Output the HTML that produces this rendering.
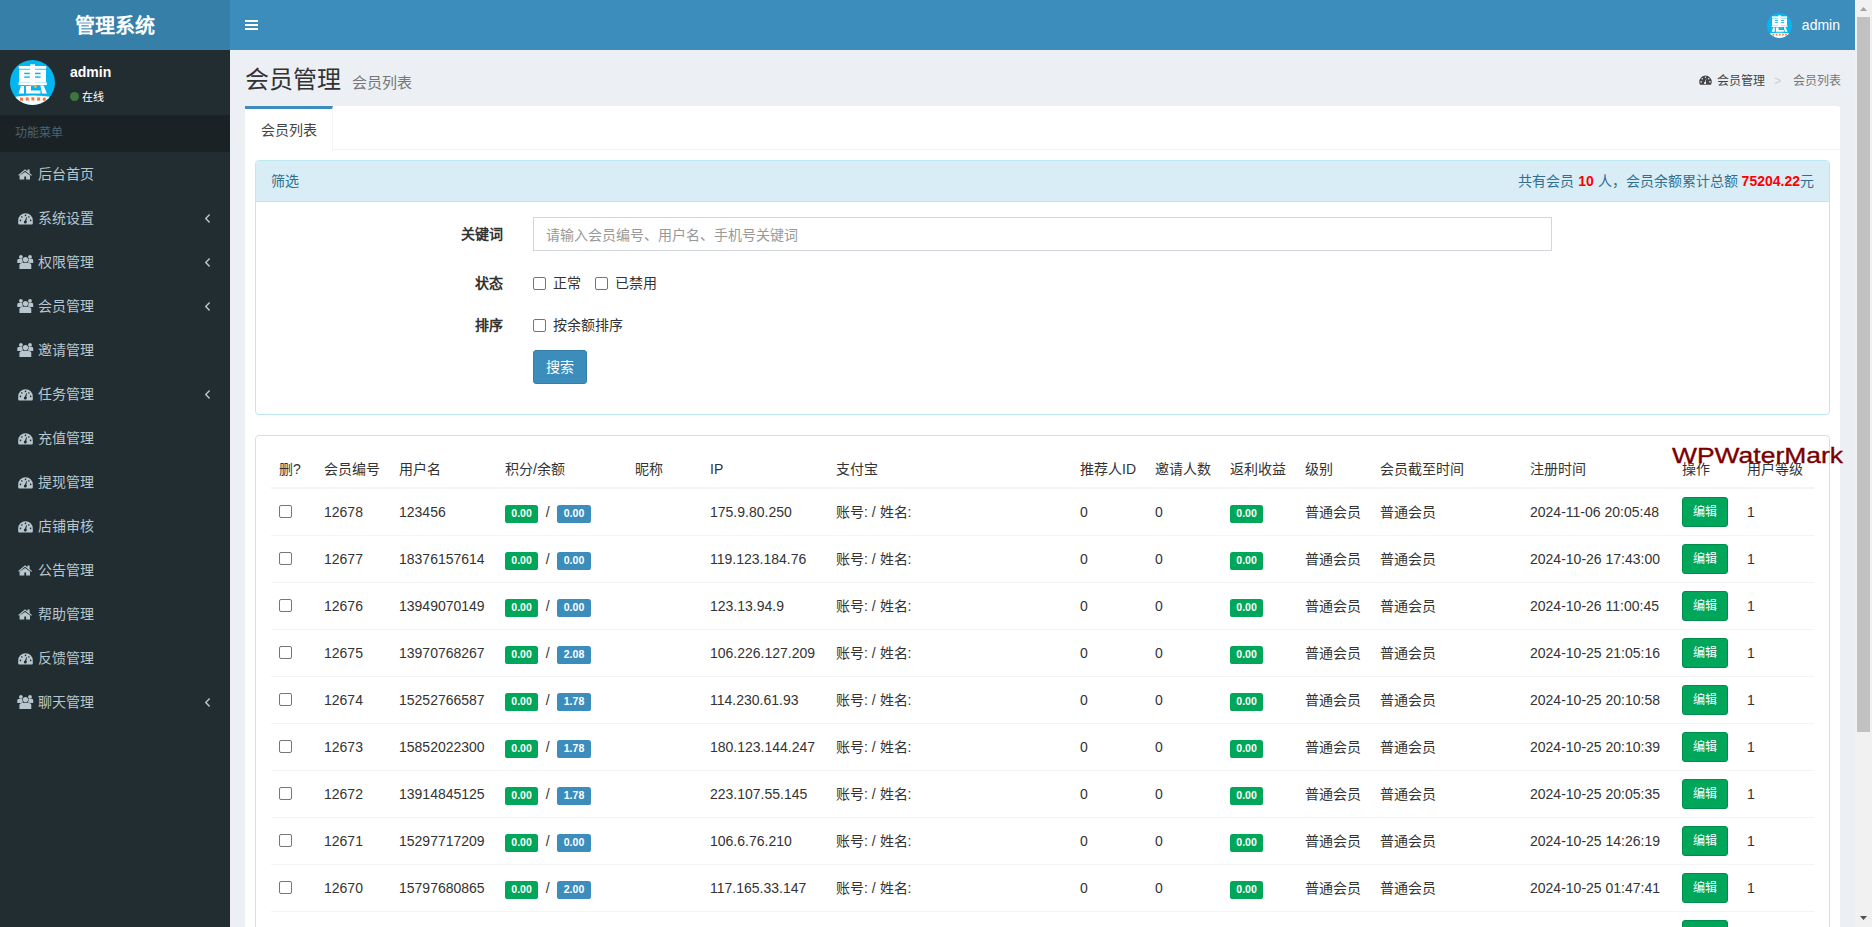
<!DOCTYPE html>
<html lang="zh-CN">
<head>
<meta charset="utf-8">
<title>管理系统</title>
<style>
*{box-sizing:border-box;margin:0;padding:0}
html,body{width:1872px;height:927px;overflow:hidden}
body{font-family:"Liberation Sans",sans-serif;font-size:14px;line-height:1.42857143;color:#333;background:#ecf0f5;position:relative}
.logo{position:absolute;left:0;top:0;width:230px;height:50px;background:#367fa9;color:#fff;font-size:20px;line-height:50px;padding-top:1px;text-align:center;font-weight:bold}
.navbar{position:absolute;left:230px;top:0;width:1625px;height:50px;background:#3c8dbc}
.toggle{position:absolute;left:15px;top:20px;width:13px;height:10px}
.toggle i{position:absolute;left:0;width:13px;height:2px;background:#fff}
.nav-user{position:absolute;right:15px;top:0;height:50px;color:#fff;font-size:14px;line-height:50px}
.nav-user .av{position:absolute;left:-35px;top:13px;width:25px;height:25px}
.sidebar{position:absolute;left:0;top:50px;width:230px;height:877px;background:#222d32}
.user-panel{position:relative;height:65px}
.user-panel .av{position:absolute;left:10px;top:10px;width:45px;height:45px}
.user-panel .name{position:absolute;left:70px;top:12px;color:#fff;font-weight:bold;font-size:14px;line-height:20px}
.user-panel .st{position:absolute;left:70px;top:42px;color:#fff;font-size:11px;line-height:11px}
.user-panel .st i{display:inline-block;width:9px;height:9px;border-radius:50%;background:#3c763d;margin-right:3px;vertical-align:-0px}
.menu-h{height:37px;background:#1a2226;color:#4b646f;font-size:12px;line-height:17px;padding:10px 15px}
.menu li{list-style:none;position:relative;height:44px;color:#b8c7ce;font-size:14px;line-height:20px;padding:12px 5px 12px 38px}
.menu li svg.ic{position:absolute;left:17.5px;top:16.5px}
.menu li .chev{position:absolute;left:205px;top:18px}
.content-h{position:absolute;left:245px;top:67px}
.content-h h1{font-size:24px;font-weight:normal;line-height:26px;color:#333}
.content-h h1 small{font-size:15px;color:#777;padding-left:4px}
.bc{position:absolute;right:31px;top:73px;font-size:12px;line-height:17px;color:#444}
.bc .sep{color:#ccc;padding:0 8.5px 0 9px}
.bc .act{color:#777}
.box{position:absolute;left:245px;top:106px;width:1595px;height:850px;background:#fff;border-radius:3px}
.tabs{position:relative;height:44px;border-bottom:1px solid #f4f4f4}
.tab{position:absolute;left:0;top:0;width:88px;height:45px;border-top:3px solid #3c8dbc;border-right:1px solid #f4f4f4;background:#fff;color:#444;padding:11px 15px 0 16px;line-height:20px}
.panel{position:absolute;left:10px;border-radius:4px;background:#fff}
.p1{top:54px;width:1575px;height:255px;border:1px solid #bce8f1}
.p1 .ph{height:41px;background:#d9edf7;border-bottom:1px solid #bce8f1;color:#31708f;padding:10px 15px;line-height:20px;border-radius:3px 3px 0 0;position:relative}
.p1 .ph .sum{position:absolute;right:15px;top:10px}
.p1 .ph .sum b{color:#f00;font-weight:bold}
.lbl{position:absolute;font-weight:bold;color:#333;text-align:right;width:100px;line-height:20px}
.inp{position:absolute;left:277px;top:56px;width:1019px;height:34px;border:1px solid #d2d6de;color:#999;padding:7px 12px 5px;line-height:20px}
.cb{position:absolute;width:13px;height:13px;border:1px solid #767676;border-radius:2px;background:#fff}
.txt{position:absolute;line-height:20px;color:#333}
.btn-s{position:absolute;left:277px;top:189px;width:54px;height:34px;background:#3c8dbc;border:1px solid #367fa9;border-radius:3px;color:#fff;line-height:20px;padding:6px 0;text-align:center}
.p2{top:329px;width:1575px;height:600px;border:1px solid #ddd}
table{position:absolute;left:15px;top:15px;width:1543px;border-collapse:collapse;table-layout:fixed}
th{font-weight:normal;text-align:left;padding:8px;line-height:20px;border-bottom:2px solid #f4f4f4;color:#333;height:36px}
td{padding:8px;line-height:20px;border-bottom:1px solid #f4f4f4;vertical-align:middle;height:46px;white-space:nowrap;color:#333}
.lab{display:inline;font-size:10.5px;font-weight:bold;line-height:1;padding:2.1px 6.3px 4.1px;border-radius:.25em;color:#fff;vertical-align:baseline}
.sl{margin:0 3.9px}
.g{background:#00a65a}.bl{background:#3c8dbc}
.edit{display:inline-block;width:46px;height:30px;background:#00a65a;border:1px solid #008d4c;border-radius:3px;color:#fff;font-size:12px;line-height:18px;padding:5px 0;text-align:center}
td .cbx{display:inline-block;width:13px;height:13px;border:1px solid #767676;border-radius:2px;vertical-align:-1px}
.wm{position:absolute;left:1671.5px;top:442.5px;color:#7a0000;font-weight:normal;-webkit-text-stroke:0.35px #7a0000;font-size:22.5px;line-height:26px;white-space:nowrap;transform-origin:0 0;transform:scaleX(1.176)}
.sb{position:absolute;left:1855px;top:0;width:17px;height:927px;background:#f1f1f1}
.sb .th{position:absolute;left:2px;top:17px;width:13px;height:715px;background:#c1c1c1}
</style>
</head>
<body>
<div class="logo">管理系统</div>
<div class="navbar">
  <div class="toggle"><i style="top:0"></i><i style="top:4px"></i><i style="top:8px"></i></div>
  <div class="nav-user">
    <svg class="av" viewBox="0 0 45 45"><use href="#logo"/></svg>admin
  </div>
</div>

<svg width="0" height="0" style="position:absolute">
  <defs>
    <g id="logo">
      <clipPath id="cc"><circle cx="22.5" cy="22.5" r="22.5"/></clipPath>
      <g clip-path="url(#cc)">
        <rect width="45" height="45" fill="#04b6f0"/>
        <path d="M0 37.5 Q22.5 33.5 45 37.5 V45 H0Z" fill="#fff"/>
        <rect x="8.8" y="6" width="27.4" height="2.8" fill="#fff"/>
        <rect x="20.2" y="4.3" width="4.8" height="21" fill="#fff"/>
        <rect x="9.2" y="9.6" width="26.8" height="12.6" fill="#fff"/>
        <rect x="14.2" y="12.7" width="5.6" height="1.5" fill="#04b6f0"/>
        <rect x="25" y="12.7" width="5.6" height="1.5" fill="#04b6f0"/>
        <rect x="14.2" y="16.4" width="5.6" height="1.4" fill="#04b6f0"/>
        <rect x="25" y="16.4" width="5.6" height="1.4" fill="#04b6f0"/>
        <rect x="8.5" y="22.3" width="28.3" height="2.8" fill="#fff"/>
        <path d="M8.5 33.6 H14 V26 H10.9Z M16 26 H21 V30.4 H30.4 V33.6 H16Z M30.4 25.6 H33.6 L36.9 33.6 H32Z" fill="#fff"/>
        <circle cx="25.5" cy="26.8" r="1.3" fill="#f6b73c"/>
        <g fill="#f47a45"><rect x="10" y="37.6" width="3" height="3.2"/><rect x="15.7" y="37.4" width="3" height="3.2"/><rect x="21.4" y="37.3" width="3" height="3.2"/><rect x="27.1" y="37.4" width="3" height="3.2"/><rect x="32.8" y="37.6" width="3" height="3.2"/></g>
      </g>
    </g>
    <g id="home"><path d="M7.1 0.3 L0.2 5.9 L1.0 6.8 L7.1 1.8 L13.2 6.8 L14 5.9 L11.6 4 V0.6 H9.5 V2.3 Z M1.6 6.5 L7.1 2.9 L12 6.5 V10.4 H8.1 V7.5 H6.3 V10.4 H1.6Z" fill="#b8c7ce"/></g>
    <g id="dash"><path d="M0.2 7.5 A7.3 7.3 0 0 1 14.8 7.5 V10.6 Q14.8 11.6 13.8 11.6 H1.2 Q0.2 11.6 0.2 10.6 Z" fill="#b8c7ce"/><g fill="#222d32"><rect x="6.8" y="1.6" width="1.4" height="1.6"/><rect x="3.1" y="3.3" width="1.4" height="1.3"/><rect x="10.1" y="3.3" width="1.4" height="1.3"/><rect x="1.8" y="6.6" width="1.4" height="1.6"/><rect x="11.9" y="6.6" width="1.4" height="1.6"/><circle cx="7.3" cy="9.0" r="1.5"/><path d="M6.6 8.8 L8.2 4.3 L9 4.5 L8 9.2Z"/></g></g>
    <g id="users"><g fill="#b8c7ce"><circle cx="3.9" cy="1.9" r="1.9"/><circle cx="13" cy="1.9" r="1.9"/><circle cx="8.5" cy="4.6" r="2.6"/><path d="M1.5 4 H5.2 Q5.4 6.3 6.2 7.4 Q4.4 7.8 3.8 8 H0.3 V5.2 Q0.3 4 1.5 4Z"/><path d="M15 4 H11.6 Q11.6 6.3 10.8 7.4 Q12.6 7.8 13.2 8 H16.2 V5.2 Q16.2 4 15 4Z"/><path d="M2.4 9.8 Q2.6 8.2 5.5 7.8 H11.5 Q14.3 8.2 14.3 9.8 V14 H2.4Z"/></g></g>
    <g id="chev"><path d="M4.6 0.5 L0.8 4.5 L4.6 8.5" stroke="#b8c7ce" stroke-width="1.4" fill="none"/></g>
  </defs>
</svg>

<div class="sidebar">
  <div class="user-panel">
    <svg class="av" viewBox="0 0 45 45"><use href="#logo"/></svg>
    <div class="name">admin</div>
    <div class="st"><i></i>在线</div>
  </div>
  <div class="menu-h">功能菜单</div>
  <ul class="menu">
    <li><svg class="ic" width="14" height="11"><use href="#home"/></svg>后台首页</li>
    <li><svg class="ic" width="15" height="12"><use href="#dash"/></svg>系统设置<svg class="chev" width="6" height="9"><use href="#chev"/></svg></li>
    <li><svg class="ic" width="17" height="14" style="top:15px;left:17px"><use href="#users"/></svg>权限管理<svg class="chev" width="6" height="9"><use href="#chev"/></svg></li>
    <li><svg class="ic" width="17" height="14" style="top:15px;left:17px"><use href="#users"/></svg>会员管理<svg class="chev" width="6" height="9"><use href="#chev"/></svg></li>
    <li><svg class="ic" width="17" height="14" style="top:15px;left:17px"><use href="#users"/></svg>邀请管理</li>
    <li><svg class="ic" width="15" height="12"><use href="#dash"/></svg>任务管理<svg class="chev" width="6" height="9"><use href="#chev"/></svg></li>
    <li><svg class="ic" width="15" height="12"><use href="#dash"/></svg>充值管理</li>
    <li><svg class="ic" width="15" height="12"><use href="#dash"/></svg>提现管理</li>
    <li><svg class="ic" width="15" height="12"><use href="#dash"/></svg>店铺审核</li>
    <li><svg class="ic" width="14" height="11"><use href="#home"/></svg>公告管理</li>
    <li><svg class="ic" width="14" height="11"><use href="#home"/></svg>帮助管理</li>
    <li><svg class="ic" width="15" height="12"><use href="#dash"/></svg>反馈管理</li>
    <li><svg class="ic" width="17" height="14" style="top:15px;left:17px"><use href="#users"/></svg>聊天管理<svg class="chev" width="6" height="9"><use href="#chev"/></svg></li>
  </ul>
</div>

<div class="content-h"><h1>会员管理 <small>会员列表</small></h1></div>
<div class="bc"><svg width="13" height="11" style="vertical-align:-1px;margin-right:5px" viewBox="0 0 15 12"><path d="M7.5 0.3 A7.2 7.2 0 0 0 0.3 7.5 C0.3 8.8 0.6 10 1.2 11 H13.8 C14.4 10 14.7 8.8 14.7 7.5 A7.2 7.2 0 0 0 7.5 0.3Z" fill="#444"/><g fill="#ecf0f5"><circle cx="7.5" cy="2.3" r="0.9"/><circle cx="3.8" cy="4" r="0.9"/><circle cx="11.2" cy="4" r="0.9"/><circle cx="2.4" cy="7.6" r="0.9"/><circle cx="12.6" cy="7.6" r="0.9"/><circle cx="7" cy="9" r="1.3"/><path d="M6.4 8.8 L8.6 3.2 L7.6 9.2Z"/></g></svg>会员管理<span class="sep">&gt;&nbsp;</span><span class="act">会员列表</span></div>

<div class="box">
  <div class="tabs"><div class="tab">会员列表</div></div>
  <div class="panel p1">
<div class="ph">筛选<div class="sum">共有会员 <b>10</b> 人，会员余额累计总额 <b>75204.22</b>元</div></div>
<div class="lbl" style="left:147px;top:63px">关键词</div>
<div class="inp">请输入会员编号、用户名、手机号关键词</div>
<div class="lbl" style="left:147px;top:112px">状态</div>
<div class="cb" style="left:277px;top:116px"></div><div class="txt" style="left:297px;top:112px">正常</div>
<div class="cb" style="left:339px;top:116px"></div><div class="txt" style="left:359px;top:112px">已禁用</div>
<div class="lbl" style="left:147px;top:154px">排序</div>
<div class="cb" style="left:277px;top:158px"></div><div class="txt" style="left:297px;top:154px">按余额排序</div>
<div class="btn-s">搜索</div>
</div>
<div class="panel p2">
<table>
<colgroup><col style="width:45px"><col style="width:75px"><col style="width:106px"><col style="width:130px"><col style="width:75px"><col style="width:126px"><col style="width:244px"><col style="width:75px"><col style="width:75px"><col style="width:75px"><col style="width:75px"><col style="width:150px"><col style="width:152px"><col style="width:65px"><col style="width:75px"></colgroup>
<thead><tr><th>删?</th><th>会员编号</th><th>用户名</th><th>积分/余额</th><th>昵称</th><th>IP</th><th>支付宝</th><th>推荐人ID</th><th>邀请人数</th><th>返利收益</th><th>级别</th><th>会员截至时间</th><th>注册时间</th><th>操作</th><th>用户等级</th></tr></thead><tbody>
<tr><td><span class="cbx"></span></td><td>12678</td><td>123456</td><td><span class="lab g">0.00</span> <span class="sl">/</span> <span class="lab bl">0.00</span></td><td></td><td>175.9.80.250</td><td>账号: / 姓名:</td><td>0</td><td>0</td><td><span class="lab g">0.00</span></td><td>普通会员</td><td>普通会员</td><td>2024-11-06 20:05:48</td><td><span class="edit">编辑</span></td><td>1</td></tr>
<tr><td><span class="cbx"></span></td><td>12677</td><td>18376157614</td><td><span class="lab g">0.00</span> <span class="sl">/</span> <span class="lab bl">0.00</span></td><td></td><td>119.123.184.76</td><td>账号: / 姓名:</td><td>0</td><td>0</td><td><span class="lab g">0.00</span></td><td>普通会员</td><td>普通会员</td><td>2024-10-26 17:43:00</td><td><span class="edit">编辑</span></td><td>1</td></tr>
<tr><td><span class="cbx"></span></td><td>12676</td><td>13949070149</td><td><span class="lab g">0.00</span> <span class="sl">/</span> <span class="lab bl">0.00</span></td><td></td><td>123.13.94.9</td><td>账号: / 姓名:</td><td>0</td><td>0</td><td><span class="lab g">0.00</span></td><td>普通会员</td><td>普通会员</td><td>2024-10-26 11:00:45</td><td><span class="edit">编辑</span></td><td>1</td></tr>
<tr><td><span class="cbx"></span></td><td>12675</td><td>13970768267</td><td><span class="lab g">0.00</span> <span class="sl">/</span> <span class="lab bl">2.08</span></td><td></td><td>106.226.127.209</td><td>账号: / 姓名:</td><td>0</td><td>0</td><td><span class="lab g">0.00</span></td><td>普通会员</td><td>普通会员</td><td>2024-10-25 21:05:16</td><td><span class="edit">编辑</span></td><td>1</td></tr>
<tr><td><span class="cbx"></span></td><td>12674</td><td>15252766587</td><td><span class="lab g">0.00</span> <span class="sl">/</span> <span class="lab bl">1.78</span></td><td></td><td>114.230.61.93</td><td>账号: / 姓名:</td><td>0</td><td>0</td><td><span class="lab g">0.00</span></td><td>普通会员</td><td>普通会员</td><td>2024-10-25 20:10:58</td><td><span class="edit">编辑</span></td><td>1</td></tr>
<tr><td><span class="cbx"></span></td><td>12673</td><td>15852022300</td><td><span class="lab g">0.00</span> <span class="sl">/</span> <span class="lab bl">1.78</span></td><td></td><td>180.123.144.247</td><td>账号: / 姓名:</td><td>0</td><td>0</td><td><span class="lab g">0.00</span></td><td>普通会员</td><td>普通会员</td><td>2024-10-25 20:10:39</td><td><span class="edit">编辑</span></td><td>1</td></tr>
<tr><td><span class="cbx"></span></td><td>12672</td><td>13914845125</td><td><span class="lab g">0.00</span> <span class="sl">/</span> <span class="lab bl">1.78</span></td><td></td><td>223.107.55.145</td><td>账号: / 姓名:</td><td>0</td><td>0</td><td><span class="lab g">0.00</span></td><td>普通会员</td><td>普通会员</td><td>2024-10-25 20:05:35</td><td><span class="edit">编辑</span></td><td>1</td></tr>
<tr><td><span class="cbx"></span></td><td>12671</td><td>15297717209</td><td><span class="lab g">0.00</span> <span class="sl">/</span> <span class="lab bl">0.00</span></td><td></td><td>106.6.76.210</td><td>账号: / 姓名:</td><td>0</td><td>0</td><td><span class="lab g">0.00</span></td><td>普通会员</td><td>普通会员</td><td>2024-10-25 14:26:19</td><td><span class="edit">编辑</span></td><td>1</td></tr>
<tr><td><span class="cbx"></span></td><td>12670</td><td>15797680865</td><td><span class="lab g">0.00</span> <span class="sl">/</span> <span class="lab bl">2.00</span></td><td></td><td>117.165.33.147</td><td>账号: / 姓名:</td><td>0</td><td>0</td><td><span class="lab g">0.00</span></td><td>普通会员</td><td>普通会员</td><td>2024-10-25 01:47:41</td><td><span class="edit">编辑</span></td><td>1</td></tr>
<tr><td><span class="cbx"></span></td><td>12669</td><td>15000000000</td><td><span class="lab g">0.00</span> <span class="sl">/</span> <span class="lab bl">0.00</span></td><td></td><td>1.1.1.1</td><td>账号: / 姓名:</td><td>0</td><td>0</td><td><span class="lab g">0.00</span></td><td>普通会员</td><td>普通会员</td><td>2024-10-25 01:00:00</td><td><span class="edit">编辑</span></td><td>1</td></tr>
</tbody></table>
</div>
</div>

<div class="wm">WPWaterMark</div>
<div class="sb"><div class="th"></div><svg style="position:absolute;left:5px;top:7px" width="7" height="4"><path d="M0 4 L3.5 0 L7 4Z" fill="#a3a3a3"/></svg><svg style="position:absolute;left:5px;top:916px" width="7" height="4"><path d="M0 0 L7 0 L3.5 4Z" fill="#505050"/></svg></div>
</body>
</html>
